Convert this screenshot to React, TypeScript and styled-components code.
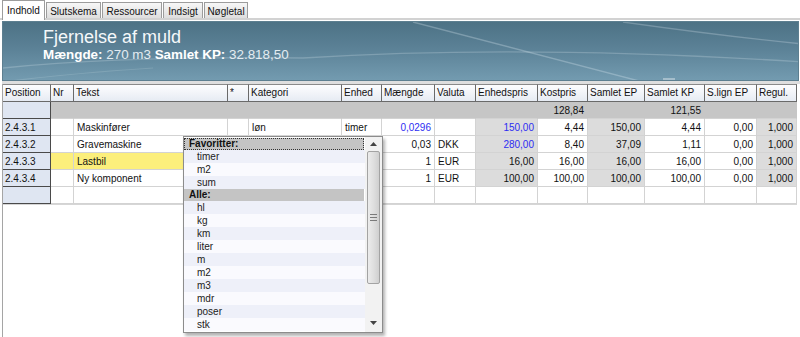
import * as React from "react";
import styled, { createGlobalStyle } from "styled-components";

const GlobalStyle = createGlobalStyle`
  html, body {
    margin: 0;
    padding: 0;
    background: #ffffff;
  }
  body {
    font-family: "Liberation Sans", Arial, sans-serif;
    font-size: 10px;
    color: #1a1a1a;
  }
`;

const Page = styled.div`
  width: 800px;
  height: 337px;
  overflow: hidden;
  position: relative;
  display: flex;
  flex-direction: column;
  background: #ffffff;
`;

const TabStrip = styled.div`
  height: 18px;
  display: flex;
  align-items: flex-end;
  padding-left: 2px;
  gap: 1px;
  border-bottom: 2px solid #d2d2d2;
`;

const Tab = styled.div<{ $w: number; $active?: boolean }>`
  width: ${(p) => p.$w}px;
  box-sizing: border-box;
  height: ${(p) => (p.$active ? 20 : 16)}px;
  margin-bottom: ${(p) => (p.$active ? -2 : 0)}px;
  border: 1px solid #9c9c9c;
  border-bottom: none;
  background: ${(p) =>
    p.$active ? "#ffffff" : "linear-gradient(#f7f7f7, #dedede)"};
  display: flex;
  align-items: center;
  justify-content: center;
  font-size: 10px;
  color: #111;
  padding-top: ${(p) => (p.$active ? 0 : 1)}px;
  position: relative;
  z-index: ${(p) => (p.$active ? 2 : 1)};
`;

const Banner = styled.div`
  position: relative;
  height: 60px;
  margin: 1px 1px 0 2px;
  border: 1px solid #5d7f90;
  background: linear-gradient(#4d7285 0%, #5b8196 45%, #739bb0 100%);
  padding: 5px 0 0 40px;
  box-sizing: border-box;
  overflow: hidden;
`;

const Swirl = styled.svg`
  position: absolute;
  left: 0;
  top: 0;
  pointer-events: none;
`;

const Title = styled.div`
  position: relative;
  font-size: 18px;
  line-height: 20px;
  color: #f5f8fa;
`;

const Subtitle = styled.div`
  position: relative;
  font-size: 13.4px;
  line-height: 16px;
  color: #e4ecf1;
  b {
    color: #ffffff;
  }
`;

const Grip = styled.div`
  position: absolute;
  left: 660px;
  bottom: 0;
  width: 12px;
  height: 2px;
  background-image: radial-gradient(circle, #dfe7ec 0.6px, transparent 0.8px);
  background-size: 2px 2px;
`;

const Splitter = styled.div`
  height: 3px;
  margin-left: 2px;
  background: #dedede;
`;

const GridPanel = styled.div`
  flex: 1;
  margin-left: 2px;
  border-left: 1px solid #a5a5a5;
`;

const Grid = styled.div<{ $template: string }>`
  display: grid;
  grid-template-columns: ${(p) => p.$template};
  grid-template-rows: 18px;
  grid-auto-rows: 17px;
  border-bottom: 1px solid #d6d6d6;
  width: 794px;
`;

const HeadCell = styled.div<{ $sup?: boolean }>`
  box-sizing: border-box;
  border-top: 1px solid #8a8a8a;
  border-right: 1px solid #6a6a6a;
  border-bottom: 1px solid #6a6a6a;
  background: linear-gradient(#fdfdfe, #e6ebf3);
  padding: 0 2px;
  display: flex;
  align-items: ${(p) => (p.$sup ? "flex-start" : "center")};
  line-height: 16px;
  white-space: nowrap;
  overflow: hidden;
  color: #111;
`;

const RowHead = styled.div`
  box-sizing: border-box;
  border-right: 1px solid #4a4a4a;
  border-bottom: 1px solid #4a4a4a;
  background: #dfe6f2;
  padding: 0 2px;
  display: flex;
  align-items: center;
  color: #111;
`;

const Cell = styled.div<{ $bg: string; $right?: boolean; $blue?: boolean; $line?: boolean }>`
  box-sizing: border-box;
  border-right: 1px solid ${(p) => (p.$line ? "#d3d3d3" : p.$bg)};
  border-bottom: 1px solid #d3d3d3;
  background: ${(p) => p.$bg};
  padding: 0 3px;
  display: flex;
  align-items: center;
  justify-content: ${(p) => (p.$right ? "flex-end" : "flex-start")};
  color: ${(p) => (p.$blue ? "#2d2df2" : "#111")};
  white-space: nowrap;
  overflow: hidden;
`;

const Dropdown = styled.div`
  position: absolute;
  left: 183px;
  top: 136px;
  width: 200px;
  height: 197px;
  box-sizing: border-box;
  border: 1px solid #8c8c8c;
  background: #ffffff;
  box-shadow: 2px 3px 3px rgba(0, 0, 0, 0.3);
  display: flex;
  z-index: 10;
`;

const List = styled.div`
  flex: 1;
  padding-top: 1px;
  display: flex;
  flex-direction: column;
`;

const GroupHead = styled.div<{ $focus?: boolean }>`
  height: 12px;
  line-height: 12px;
  margin-right: 1px;
  padding-left: 5px;
  background: #c4c4c4;
  font-weight: bold;
  color: #111;
  outline: ${(p) => (p.$focus ? "1px dotted #333" : "none")};
  outline-offset: -1px;
`;

const Item = styled.div<{ $alt: boolean }>`
  height: 13px;
  line-height: 13px;
  padding-left: 13px;
  background: ${(p) => (p.$alt ? "#eef0f9" : "#fafafe")};
  color: #222;
`;

const ScrollBar = styled.div`
  width: 17px;
  background: #f2f2f2;
  display: flex;
  flex-direction: column;
  align-items: center;
  padding: 5px 0 7px;
  box-sizing: border-box;
`;

const Thumb = styled.div`
  margin-top: 5px;
  width: 13px;
  height: 133px;
  box-sizing: border-box;
  border: 1px solid #a3a3a3;
  border-radius: 2px;
  background: linear-gradient(90deg, #ececec, #dcdcdc 60%, #cfcfcf);
  display: flex;
  align-items: center;
  justify-content: center;
`;

const Spacer = styled.div`
  flex: 1;
`;

type Col = { title: string; w: number; num?: boolean; shade?: boolean };

const cols: Col[] = [
  { title: "Position", w: 48 },
  { title: "Nr", w: 23 },
  { title: "Tekst", w: 154 },
  { title: "*", w: 21 },
  { title: "Kategori", w: 93 },
  { title: "Enhed", w: 40 },
  { title: "Mængde", w: 53, num: true },
  { title: "Valuta", w: 41 },
  { title: "Enhedspris", w: 62, num: true, shade: true },
  { title: "Kostpris", w: 50, num: true },
  { title: "Samlet EP", w: 57, num: true, shade: true },
  { title: "Samlet KP", w: 60, num: true },
  { title: "S.lign EP", w: 52, num: true },
  { title: "Regul.", w: 40, num: true, shade: true },
];

// values after the Position column
const rows: { pos: string; cells: string[]; blue?: number[]; yellow?: number[] }[] = [
  {
    pos: "2.4.3.1",
    cells: ["", "Maskinfører", "", "løn", "timer", "0,0296", "", "150,00", "4,44", "150,00", "4,44", "0,00", "1,000"],
    blue: [5, 7],
  },
  {
    pos: "2.4.3.2",
    cells: ["", "Gravemaskine", "", "", "", "0,03", "DKK", "280,00", "8,40", "37,09", "1,11", "0,00", "1,000"],
    blue: [7],
  },
  {
    pos: "2.4.3.3",
    cells: ["", "Lastbil", "", "", "", "1", "EUR", "16,00", "16,00", "16,00", "16,00", "0,00", "1,000"],
    yellow: [0, 1],
  },
  {
    pos: "2.4.3.4",
    cells: ["", "Ny komponent", "", "", "", "1", "EUR", "100,00", "100,00", "100,00", "100,00", "0,00", "1,000"],
  },
];

const sums = ["", "", "", "", "", "", "", "", "128,84", "", "121,55", "", ""];

type Entry = { head: string; focus?: boolean } | string;

const units: Entry[] = [
  { head: "Favoritter:", focus: true },
  "timer",
  "m2",
  "sum",
  { head: "Alle:" },
  "hl",
  "kg",
  "km",
  "liter",
  "m",
  "m2",
  "m3",
  "mdr",
  "poser",
  "stk",
];

const tabs = [
  { label: "Indhold", w: 43, active: true },
  { label: "Slutskema", w: 55 },
  { label: "Ressourcer", w: 60 },
  { label: "Indsigt", w: 40 },
  { label: "Nøgletal", w: 44 },
];

const Arrow = ({ up }: { up?: boolean }) => (
  <svg width="7" height="4" viewBox="0 0 7 4">
    <path d={up ? "M0 4 L3.5 0 L7 4 Z" : "M0 0 L3.5 4 L7 0 Z"} fill="#444" />
  </svg>
);

const GripLines = () => (
  <svg width="7" height="7" viewBox="0 0 7 7">
    <path d="M0 0.5 H7 M0 3.5 H7 M0 6.5 H7" stroke="#7a7a7a" strokeWidth="1" />
  </svg>
);

const App = () => {
  const template = cols.map((c) => c.w + "px").join(" ");
  let alt = false;
  return (
    <Page>
      <GlobalStyle />
      <TabStrip>
        {tabs.map((t) => (
          <Tab key={t.label} $w={t.w} $active={t.active}>
            {t.label}
          </Tab>
        ))}
      </TabStrip>
      <Banner>
        <Swirl width="800" height="60" viewBox="0 0 800 60">
          <path d="M410 0 L640 60" stroke="rgba(235,245,250,0.28)" strokeWidth="1.4" fill="none" />
          <path d="M0 46 Q120 34 300 36 Q520 22 800 40" stroke="rgba(235,245,250,0.22)" strokeWidth="1.3" fill="none" />
          <path d="M620 0 Q720 14 800 22" stroke="rgba(235,245,250,0.25)" strokeWidth="1.3" fill="none" />
          <path d="M0 60 Q60 52 150 46" stroke="rgba(235,245,250,0.15)" strokeWidth="1.2" fill="none" />
        </Swirl>
        <Title>Fjernelse af muld</Title>
        <Subtitle>
          <b>Mængde:</b> 270 m3 <b>Samlet KP:</b> 32.818,50
        </Subtitle>
        <Grip />
      </Banner>
      <Splitter />
      <GridPanel>
        <Grid $template={template}>
          {cols.map((c) => (
            <HeadCell key={c.title} $sup={c.title === "*"}>
              {c.title}
            </HeadCell>
          ))}

          <RowHead />
          {sums.map((v, i) => (
            <Cell key={"s" + i} $bg="#c6c6c6" $right>
              {v}
            </Cell>
          ))}

          {rows.map((r) => (
            <React.Fragment key={r.pos}>
              <RowHead>{r.pos}</RowHead>
              {r.cells.map((v, i) => {
                const col = cols[i + 1];
                const yellow = r.yellow?.includes(i);
                const bg = yellow ? "#fcef7c" : col.shade ? "#dcdcdc" : "#ffffff";
                return (
                  <Cell
                    key={i}
                    $bg={bg}
                    $line
                    $right={col.num}
                    $blue={r.blue?.includes(i)}
                  >
                    {v}
                  </Cell>
                );
              })}
            </React.Fragment>
          ))}

          <RowHead />
          {cols.slice(1).map((c) => (
            <Cell key={"e" + c.title} $bg="#ffffff" $line />
          ))}
        </Grid>
      </GridPanel>

      <Dropdown>
        <List>
          {units.map((u, i) => {
            if (typeof u !== "string") {
              alt = false;
              return (
                <GroupHead key={i} $focus={u.focus}>
                  {u.head}
                </GroupHead>
              );
            }
            alt = !alt;
            return (
              <Item key={i} $alt={alt}>
                {u}
              </Item>
            );
          })}
        </List>
        <ScrollBar>
          <Arrow up />
          <Thumb>
            <GripLines />
          </Thumb>
          <Spacer />
          <Arrow />
        </ScrollBar>
      </Dropdown>
    </Page>
  );
};

export default App;
